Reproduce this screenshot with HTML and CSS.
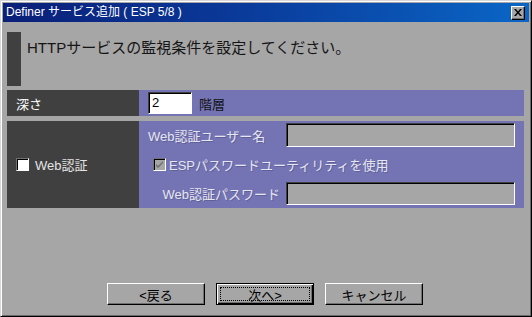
FILE: index.html
```html
<!DOCTYPE html>
<html lang="ja">
<head>
<meta charset="utf-8">
<title>Definer</title>
<link rel="stylesheet" href="styles.css">
</head>
<body>
<div class="window">
  <div class="titlebar">
    <span class="title">Definer サービス追加 ( ESP 5/8 )</span>
    <span class="close">
      <svg width="8" height="7" viewBox="0 0 8 7"><path d="M0 0h2l2 2.5L6 0h2L5 3.5 8 7H6L4 4.5 2 7H0l3-3.5z" fill="#000"/></svg>
    </span>
  </div>
  <div class="content">
    <div class="header">
      <div class="header-bar"></div>
      <div class="header-text">HTTPサービスの監視条件を設定してください。</div>
    </div>
    <div class="row row-depth">
      <div class="cell-left"><span class="label-white">深さ</span></div>
      <div class="cell-right depth">
        <div class="field field-white">2</div>
        <span class="unit">階層</span>
      </div>
    </div>
    <div class="row row-auth">
      <div class="cell-left auth-left">
        <span class="checkbox"></span>
        <span class="label-light">Web認証</span>
      </div>
      <div class="cell-right auth-grid">
        <span class="dis-label">Web認証ユーザー名</span>
        <div class="field field-grey"></div>
        <div class="check-row">
          <span class="checkbox checkbox-dis">
            <svg width="9" height="9" viewBox="0 0 9 9"><path d="M1 4l2 2 5-5v2L3 8 1 6z" fill="#6e6e6e"/></svg>
          </span>
          <span class="dis-label">ESPパスワードユーティリティを使用</span>
        </div>
        <span class="dis-label right">Web認証パスワード</span>
        <div class="field field-grey"></div>
      </div>
    </div>
    <div class="buttons">
      <button class="btn">&lt;戻る</button>
      <button class="btn btn-default"><span class="focus">次へ&gt;</span></button>
      <button class="btn">キャンセル</button>
    </div>
  </div>
</div>
</body>
</html>
```
FILE: styles.css
```css
html, body {
  margin: 0;
  padding: 0;
  background: #a6a6a6;
}
body {
  font-family: "Liberation Sans", "Noto Sans CJK JP", sans-serif;
}
.window {
  width: 532px;
  height: 317px;
  box-sizing: border-box;
  background: #a6a6a6;
  border: 1px solid;
  border-color: #d8d8d8 #000 #000 #d8d8d8;
  box-shadow: inset 1px 1px 0 #ffffff, inset -1px -1px 0 #6a6a6a;
  padding: 2px;
  display: flex;
  flex-direction: column;
}
.titlebar {
  height: 19px;
  background: linear-gradient(to right, #0a1f78 0%, #0a3a9a 45%, #0a66c6 100%);
  display: flex;
  align-items: center;
  justify-content: space-between;
  padding: 0 4px 0 3px;
  flex-shrink: 0;
}
.title {
  color: #ffffff;
  font-size: 12px;
  line-height: 19px;
  white-space: nowrap;
}
.close {
  width: 14px;
  height: 14px;
  box-sizing: border-box;
  background: #a6a6a6;
  border: 1px solid;
  border-color: #ffffff #000 #000 #ffffff;
  box-shadow: inset -1px -1px 0 #707070;
  display: flex;
  align-items: center;
  justify-content: center;
}
.content {
  flex: 1;
  display: flex;
  flex-direction: column;
  padding: 10px 5px 9px 4px;
}
.header {
  height: 54px;
  display: flex;
  gap: 6px;
}
.header-bar {
  width: 14px;
  background: #404040;
}
.header-text {
  font-size: 15px;
  line-height: 18px;
  margin-top: 7px;
  color: #151515;
  white-space: nowrap;
}
.row {
  display: flex;
}
.row-depth {
  margin-top: 4px;
  height: 26px;
}
.row-auth {
  margin-top: 5px;
  height: 87px;
}
.cell-left {
  width: 132px;
  background: #404040;
  display: flex;
  align-items: center;
  padding-left: 9px;
  box-sizing: border-box;
}
.cell-right {
  flex: 1;
  background: #7474b4;
}
.label-white {
  color: #ffffff;
  font-size: 13px;
}
.label-light {
  color: #e4e4e4;
  font-size: 13px;
}
.depth {
  display: flex;
  align-items: center;
  padding-left: 9px;
  gap: 7px;
}
.field {
  box-sizing: border-box;
  border: 1px solid;
  border-color: #404040 #ffffff #ffffff #404040;
  box-shadow: inset 1px 1px 0 #000;
}
.field-white {
  width: 44px;
  height: 22px;
  background: #ffffff;
  font-size: 13px;
  line-height: 19px;
  padding-left: 3px;
  color: #000;
}
.unit {
  font-size: 13px;
  color: #111;
}
.auth-left {
  gap: 6px;
}
.checkbox {
  width: 13px;
  height: 13px;
  box-sizing: border-box;
  background: #ffffff;
  border: 1px solid;
  border-color: #707070 #ffffff #ffffff #707070;
  box-shadow: inset 1px 1px 0 #000;
  display: flex;
  align-items: center;
  justify-content: center;
  flex-shrink: 0;
}
.checkbox-dis {
  background: #a6a6a6;
}
.auth-grid {
  display: grid;
  grid-template-columns: 1fr 229px;
  grid-template-rows: 24px 1fr 23px;
  column-gap: 6px;
  padding: 2px 9px 3px 9px;
  align-items: center;
}
.field-grey {
  height: 100%;
  background: #a6a6a6;
}
.dis-label {
  font-size: 13px;
  color: #e6e6f0;
  text-shadow: 1px 1px 0 rgba(80, 80, 130, 0.55);
  white-space: nowrap;
}
.dis-label.right {
  justify-self: end;
}
.check-row {
  grid-column: 1 / 3;
  display: flex;
  align-items: center;
  gap: 3px;
  padding-left: 5px;
}
.buttons {
  margin-top: auto;
  display: flex;
  gap: 11px;
  padding-left: 100px;
}
.btn {
  width: 98px;
  height: 22px;
  box-sizing: border-box;
  background: #a6a6a6;
  border: 1px solid;
  border-color: #ffffff #000 #000 #ffffff;
  box-shadow: inset -1px -1px 0 #707070;
  font-family: "Liberation Sans", "Noto Sans CJK JP", sans-serif;
  font-size: 13px;
  color: #000;
  padding: 0;
  display: flex;
  align-items: center;
  justify-content: center;
}
.btn-default {
  border: 1px solid #000;
  box-shadow: inset 1px 1px 0 #ffffff, inset -1px -1px 0 #000, inset -2px -2px 0 #707070;
  padding: 3px;
}
.focus {
  width: 100%;
  height: 100%;
  box-sizing: border-box;
  border: 1px dotted #000;
  display: flex;
  align-items: center;
  justify-content: center;
}
```
